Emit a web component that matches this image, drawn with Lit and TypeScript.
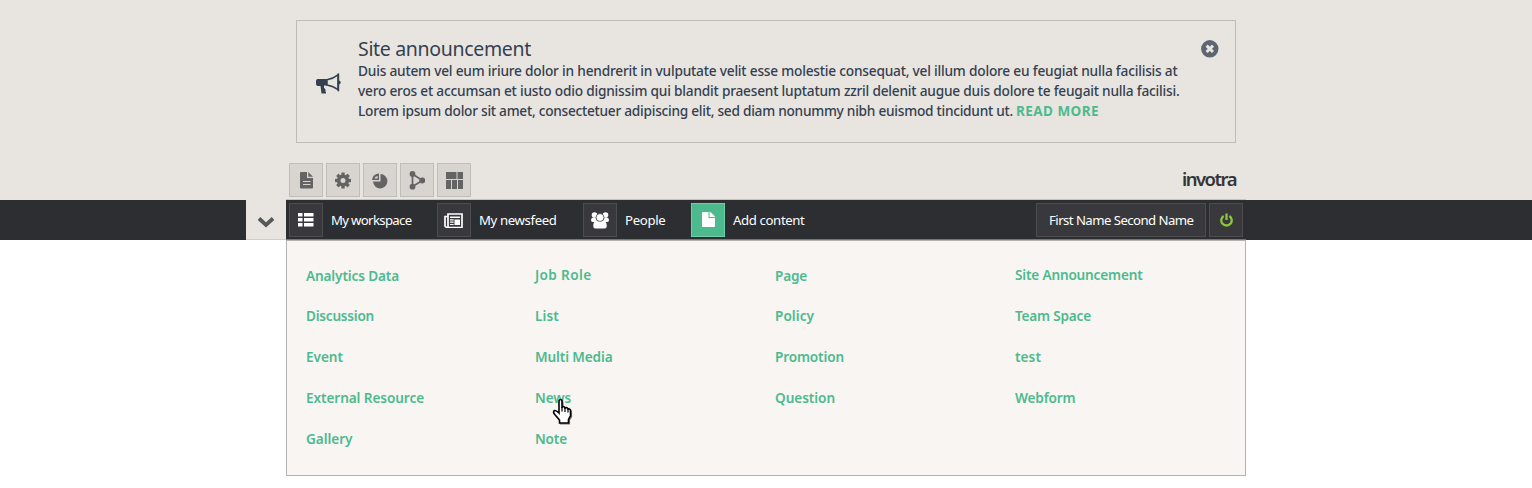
import { LitElement, html, css, svg } from "lit";
import { customElement, property } from "lit/decorators.js";

/** Text set to a given measure: the tracking is adjusted so the line fills it. */
@customElement("fit-text")
class FitText extends LitElement {
  static styles = css`
    :host { display: inline-block; white-space: pre; }
    .line { display: inline-block; white-space: pre; }
  `;
  @property({ type: Number }) measure = 0;
  @property() text = "";
  render() { return html`<span class="line">${this.text}</span>`; }
  firstUpdated() {
    const line = this.renderRoot.querySelector(".line") as HTMLElement;
    const natural = line.getBoundingClientRect().width;
    line.style.letterSpacing = `${(this.measure - natural) / this.text.length}px`;
  }
}

const t = (text: string, measure: number) => html`<fit-text .text=${text} .measure=${measure}></fit-text>`;

const gearTeeth = [0, 45, 90, 135, 180, 225, 270, 315];

const icons: Record<string, unknown> = {
  doc: svg`<path d="M1 0h6v6h6v9.500a1 1 0 0 1-1 1H1a1 1 0 0 1-1-1V1a1 1 0 0 1 1-1z"/><path d="M8.300 0l4.700 4.800H8.300z"/><path d="M3 9.500h7.500M3 12.500h7.500" stroke="#d8d5d0" stroke-width="1.200"/>`,
  gear: svg`<circle cx="8" cy="8.500" r="4.300" fill="none" stroke="currentColor" stroke-width="3.600"/>${gearTeeth.map(a => svg`<rect x="6.300" y="0.500" width="3.400" height="4" rx=".6" transform="rotate(${a} 8 8.500)"/>`)}`,
  pie: svg`<path d="M8.500 2A7.200 7.200 0 1 1 1 9.500H8.500z"/><path d="M7 1.500V8H0A7 7 0 0 1 7 1.500z"/><path d="M5.600 4v2.600H2.400A4 4 0 0 1 5.600 4z" fill="#d8d5d0"/>`,
  nodes: svg`<path d="M3.500 3v12.500L13.500 9.500z" fill="none" stroke="currentColor" stroke-width="1.700"/><circle cx="3.500" cy="3" r="2.900"/><circle cx="3.500" cy="15.700" r="2.900"/><circle cx="13.300" cy="9.500" r="3"/>`,
  blocks: svg`<path d="M0 0h10.500v7H0zM11.500 0H17v7h-5.500zM0 8h5v9H0zM6 8h5v9H6zM12 8h5v9h-5z"/>`,
  list: svg`<path d="M0 1h4.500v3.500H0zM6 1h9.500v3.500H6zM0 6h4.500v3.500H0zM6 6h9.500v3.500H6zM0 11h4.500v3.500H0zM6 11h9.500v3.500H6z"/>`,
  news: svg`<path d="M4 1H18v13.500H4zM4 3.500H1V13L2.500 14.500H4" fill="none" stroke="currentColor" stroke-width="1.700"/><path d="M6 3.500h10V5H6zM10.500 6.500H16v5.500h-5.500zM6 6.300h3.700v1.200H6zM6 8.600h3.700v1.200H6zM6 10.900h3.700v1.200H6z"/>`,
  people: svg`<circle cx="3.500" cy="3" r="2.800"/><circle cx="14.500" cy="3" r="2.800"/><path d="M0 7.500Q.5 5.500 2.500 5.500H5q.5 3 2 4.500H1.500Q0 10 0 7.500zM18 7.500Q17.500 5.500 15.500 5.500H13q-.5 3-2 4.500h5.500Q18 10 18 7.500z"/><circle cx="9" cy="5.500" r="4" stroke="#39393d" stroke-width=".8"/><path d="M2.300 13Q2.300 9.500 6 9q3 1.500 6 0 3.700.5 3.700 4v1.500q0 2-2 2h-9.400q-2 0-2-2z"/>`,
  page: svg`<path d="M1 0h5.500v6H13V14a1 1 0 0 1-1 1H1a1 1 0 0 1-1-1V1a1 1 0 0 1 1-1z"/><path d="M7.500 0q1 0 1.500.5L12.500 4q.5.500.5 1H7.500z"/>`,
  power: svg`<path d="M3.600 3A5.200 5.200 0 1 0 9.400 3M6.500 .5v6.500" fill="none" stroke="currentColor" stroke-width="2.300"/>`,
};

const icon = (name: string, w: number, h: number) =>
  html`<svg class="icon" width=${w} height=${h} viewBox="0 0 ${w} ${h}" fill="currentColor">${icons[name]}</svg>`;

const tools: [string, number, number][] = [["doc", 13, 17], ["gear", 17, 17], ["pie", 17, 17], ["nodes", 16, 19], ["blocks", 17, 17]];

const nav = [
  { name: "list", w: 16, h: 16, label: "My workspace", measure: 80.5, slot: 148 },
  { name: "news", w: 20, h: 15, label: "My newsfeed", measure: 77.5, slot: 146 },
  { name: "people", w: 18, h: 17, label: "People", measure: 40.5, slot: 108 },
  { name: "page", w: 13, h: 16, label: "Add content", measure: 71.5, slot: 150, active: true },
];

const columns: [string, number][][] = [
  [["Analytics Data", 93], ["Discussion", 68], ["Event", 37], ["External Resource", 118], ["Gallery", 46.5]],
  [["Job Role", 56.5], ["List", 24], ["Multi Media", 77.5], ["News", 36], ["Note", 32]],
  [["Page", 32], ["Policy", 39], ["Promotion", 69], ["Question", 60]],
  [["Site Announcement", 127.5], ["Team Space", 76], ["test", 26], ["Webform", 60.5]],
];

@customElement("app-root")
class AppRoot extends LitElement {
  static styles = css`
    :host { display: block; position: relative; height: 488px; overflow: hidden; background: #fff; font-family: "Noto Sans", "Open Sans", sans-serif; }
    * { box-sizing: border-box; }
    .icon { display: block; flex: none; }
    .top { height: 200px; background: #e8e5e0; padding-top: 20px; }
    .notice { width: 940px; height: 123px; margin: 0 auto; border: 1px solid #bdbcb8; display: flex; color: #344050; }
    .horn { width: 61px; padding: 52px 0 0 19px; }
    .copy { flex: 1; padding-top: 17px; }
    .title { height: 23px; line-height: 21px; font-size: 19.500px; }
    .row { height: 20px; line-height: 20px; font-size: 13.700px; font-weight: 500; white-space: nowrap; display: flex; }
    .more { color: #4dba8e; font-weight: 700; font-size: 13.500px; margin-left: 3px; }
    .close { padding: 19px 16px 0 0; }
    .tools { width: 960px; height: 57px; margin: 0 auto; padding: 20px 10px 0 3px; display: flex; gap: 3px; border-bottom: 1px solid #c6c4bf; }
    .tool { width: 34px; height: 34px; border: 1px solid #bfbdb8; background: #d8d5d0; color: #646464; display: flex; align-items: center; justify-content: center; }
    .logo { margin-left: auto; color: #353538; font-size: 18.500px; font-weight: 600; line-height: 31px; }
    .bar { height: 40px; background: #2d2e32; display: flex; justify-content: center; }
    .side { flex: 1; display: flex; justify-content: flex-end; }
    .toggle { width: 40px; height: 40px; background: #e8e5e0; border-bottom: 1px solid #d2cfca; display: flex; align-items: center; justify-content: center; padding-top: 4px; color: #57585a; }
    .nav { width: 960px; height: 40px; padding: 3px 3px 0; display: flex; border-bottom: 1px solid #77777a; color: #fff; }
    .item { display: flex; gap: 8px; line-height: 34px; font-size: 13.200px; white-space: nowrap; }
    .box { width: 34px; height: 34px; background: #39393d; border: 1px solid #4d4d4d; display: flex; align-items: center; justify-content: center; }
    .active { background: #4dba8e; border-color: #6dd0a8; }
    .user { margin-left: auto; width: 170px; height: 34px; background: #39393d; border: 1px solid #4d4d4d; line-height: 33px; font-size: 13.200px; padding-left: 12px; }
    .power { margin-left: 3px; color: #8cc63f; }
    .panel { width: 960px; height: 236px; margin: 0 auto; border: 1px solid #b5b3b2; background: #f8f5f2; display: grid; grid-template-columns: 229px 240px 240px 1fr; padding: 14px 0 0 19px; }
    .col { display: flex; flex-direction: column; }
    .link { height: 41px; line-height: 40px; font-size: 13.600px; font-weight: 600; color: #4dba8e; }
    .low:first-child { padding-top: 1px; }
    .cursor { position: absolute; left: 552px; top: 398px; }
  `;

  render() {
    return html`
      <div class="top">
        <div class="notice">
          <div class="horn">
            <svg class="icon" width="25" height="22" viewBox="0 0 25 22" fill="#344050">
              <path d="M1.500 6H11v6.500H8V15q1.500.5 1.500 2v2H10v1.500H5.500L4.500 13H1.500Q0 12.500 0 11V8q0-1.500 1.500-2z"/>
              <path d="M11 6.700Q17.500 5.500 22 1.800v15Q17.500 13 11 12z" fill="none" stroke="#344050" stroke-width="1.500"/>
              <path d="M21.500 .5h1.700v7q1.500.5 1.500 2t-1.500 2v6.800h-1.700z"/>
            </svg>
          </div>
          <div class="copy">
            <div class="title">${t("Site announcement", 173)}</div>
            <div class="row">${t("Duis autem vel eum iriure dolor in hendrerit in vulputate velit esse molestie consequat, vel illum dolore eu feugiat nulla facilisis at", 819.5)}</div>
            <div class="row">${t("vero eros et accumsan et iusto odio dignissim qui blandit praesent luptatum zzril delenit augue duis dolore te feugait nulla facilisi.", 821.5)}</div>
            <div class="row">${t("Lorem ipsum dolor sit amet, consectetuer adipiscing elit, sed diam nonummy nibh euismod tincidunt ut.", 655)}<span class="more">${t("READ MORE", 83)}</span></div>
          </div>
          <div class="close">
            <svg class="icon" width="18" height="18" viewBox="0 0 18 18"><circle cx="8.800" cy="8.800" r="8.700" fill="#5c6570"/><path d="M5.600 5.600l6.400 6.400M12 5.600l-6.400 6.400" stroke="#e8e5e0" stroke-width="3"/></svg>
          </div>
        </div>
        <div class="tools">
          ${tools.map(([n, w, h]) => html`<div class="tool">${icon(n, w, h)}</div>`)}
          <div class="logo">${t("invotra", 54)}</div>
        </div>
      </div>
      <div class="bar">
        <div class="side"><div class="toggle"><svg class="icon" width="18" height="12" viewBox="0 0 18 12"><path d="M2 2.500l7 6.500 7-6.500" fill="none" stroke="currentColor" stroke-width="3.800"/></svg></div></div>
        <div class="nav">
          ${nav.map(n => html`<div class="item" style="width:${n.slot}px"><div class="box ${n.active ? "active" : ""}">${icon(n.name, n.w, n.h)}</div>${t(n.label, n.measure)}</div>`)}
          <div class="user">${t("First Name Second Name", 144.5)}</div>
          <div class="box power">${icon("power", 13, 14)}</div>
        </div>
        <div class="side"></div>
      </div>
      <div class="panel">
        ${columns.map((c, i) => html`<div class="col">${c.map(([label, m]) => html`<div class="link ${i % 2 ? "" : "low"}">${t(label, m)}</div>`)}</div>`)}
      </div>
      <svg class="cursor" width="21" height="27" viewBox="0 0 21 27">
        <path d="M8 15V4.500Q8 2.500 9.500 2.500T11 4.500V10Q13.500 9 14 11 16.500 10 17 12 19.500 11.500 19.500 14v5L17.500 22V25.800H8.500V23L3 16.500Q2 14.500 3.500 13.500 5 13 8 16z" fill="none" stroke="#777" stroke-width="1.200"/>
        <path d="M7 14V3.500Q7 1.500 8.500 1.500T10 3.500V9Q12.500 8 13 10 15.500 9 16 11 18.500 10.500 18.500 13v5L16.500 21.500V25H7.500V22L2 15.500Q1 13.500 2.500 12.500 4 12 7 15z" fill="#fff" stroke="#000" stroke-width="1.600"/>
        <path d="M10 9v4.500M13 10v4M16 11v3.500" stroke="#000" stroke-width="1.200"/>
      </svg>
    `;
  }
}
